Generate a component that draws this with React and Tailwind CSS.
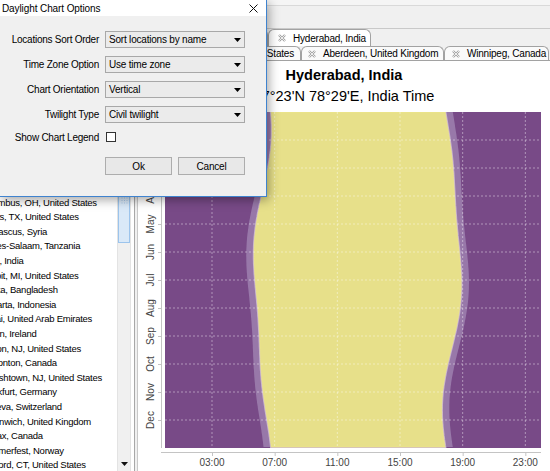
import React, { useMemo } from "react";

// Hyderabad, India
const LAT = 17.38;
const LON = 78.48;
const TZ = 5.5;

const PLOT_L = 27;
const PLOT_W = 376;
const PLOT_H = 336;

const MONTHS = ["Jan", "Feb", "Mar", "Apr", "May", "Jun", "Jul", "Aug", "Sep", "Oct", "Nov", "Dec"];
const HOURS = [3, 7, 11, 15, 19, 23];

// the list is scrolled: earlier entries sit under the options dialog
const locations = [
  "Columbus, OH, United States",
  "Dallas, TX, United States",
  "Damascus, Syria",
  "Dar-es-Salaam, Tanzania",
  "Delhi, India",
  "Detroit, MI, United States",
  "Dhaka, Bangladesh",
  "Djakarta, Indonesia",
  "Dubai, United Arab Emirates",
  "Dublin, Ireland",
  "Edison, NJ, United States",
  "Edmonton, Canada",
  "Englishtown, NJ, United States",
  "Frankfurt, Germany",
  "Geneva, Switzerland",
  "Greenwich, United Kingdom",
  "Halifax, Canada",
  "Hammerfest, Norway",
  "Hartford, CT, United States",
  "Helsinki, Finland",
];

function sunTimes(n, alt) {
  const rad = Math.PI / 180;
  const decl = -23.44 * Math.cos((2 * Math.PI * (n + 10)) / 365);
  const B = (2 * Math.PI * (n - 81)) / 364;
  const eot = 9.87 * Math.sin(2 * B) - 7.53 * Math.cos(B) - 1.5 * Math.sin(B);
  const noon = 12 + (TZ * 15 - LON) / 15 - eot / 60;
  const cosw =
    (Math.sin(alt * rad) - Math.sin(LAT * rad) * Math.sin(decl * rad)) /
    (Math.cos(LAT * rad) * Math.cos(decl * rad));
  const w = Math.acos(cosw) / rad / 15;
  return [noon - w, noon + w];
}

const hx = (h) => PLOT_L + (h / 24) * PLOT_W;

function buildCurves() {
  const rise = [];
  const set = [];
  const dawn = [];
  const dusk = [];
  for (let n = 1; n <= 366; n += 2) {
    const y = ((n - 1) / 365) * PLOT_H;
    const [r, s] = sunTimes(n, -0.833);
    const [a, b] = sunTimes(n, -6);
    rise.push(`${hx(r).toFixed(1)},${y.toFixed(1)}`);
    set.push(`${hx(s).toFixed(1)},${y.toFixed(1)}`);
    dawn.push(`${(hx(a) - 1.5).toFixed(1)},${y.toFixed(1)}`);
    dusk.push(`${(hx(b) + 1.5).toFixed(1)},${y.toFixed(1)}`);
  }
  return {
    day: [...rise, ...set.reverse()].join(" "),
    twilight: [...dawn, ...dusk.reverse()].join(" "),
  };
}

function TabClose() {
  return (
    <svg width="8" height="8" viewBox="0 0 8 8" className="shrink-0">
      <path d="M1 1L7 7M7 1L1 7" stroke="#a3a3a3" strokeWidth="2.4" />
      <path d="M1 1L7 7M7 1L1 7" stroke="#f4f4f4" strokeWidth="0.9" />
    </svg>
  );
}

function Tab({ label, width, pad, active }) {
  return (
    <div
      className={`${width} ${pad} h-full flex items-center gap-[7px] rounded-t-[6px] border border-b-0 border-[#a2a2a2] whitespace-nowrap overflow-hidden text-[10px] tracking-[-0.2px] ${
        active ? "bg-white" : "bg-[#fafafa]"
      }`}
    >
      {label && <TabClose />}
      {label && <span>{label}</span>}
    </div>
  );
}

function DaylightChart() {
  const { day, twilight } = useMemo(buildCurves, []);

  return (
    <svg width="412" height="359" className="block overflow-visible">
      <defs>
        <clipPath id="plot-area">
          <rect x={PLOT_L} y={0} width={PLOT_W} height={PLOT_H} />
        </clipPath>
      </defs>
      <rect x={PLOT_L} y={0} width={PLOT_W} height={PLOT_H} fill="#784a87" />
      <g clipPath="url(#plot-area)">
        <polygon points={twilight} fill="#9878a9" />
        <polygon points={day} fill="none" stroke="#c6b1d2" strokeWidth="2.4" />
        <polygon points={day} fill="#e7e08a" stroke="#f2ea86" strokeWidth="0.6" />
        {HOURS.map((h) => (
          <line
            key={h}
            x1={hx(h)}
            x2={hx(h)}
            y1={0}
            y2={PLOT_H}
            stroke="#ffffff"
            strokeOpacity="0.42"
            strokeDasharray="2 2"
          />
        ))}
        {MONTHS.slice(1).map((m, i) => (
          <line
            key={m}
            x1={PLOT_L}
            x2={PLOT_L + PLOT_W}
            y1={(i + 1) * 28}
            y2={(i + 1) * 28}
            stroke="#ffffff"
            strokeOpacity="0.42"
            strokeDasharray="2 2"
          />
        ))}
      </g>

      {/* axes */}
      <line x1={23.5} x2={23.5} y1={0} y2={PLOT_H} stroke="#c4c4c4" />
      <line x1={23} x2={PLOT_L + PLOT_W} y1={340.5} y2={340.5} stroke="#c4c4c4" />
      {MONTHS.map((m, i) => (
        <g key={m}>
          <line x1={20} x2={23} y1={i * 28 + 0.5} y2={i * 28 + 0.5} stroke="#c4c4c4" />
          <text
            x={12}
            y={i * 28}
            transform={`rotate(-90 12 ${i * 28})`}
            textAnchor="middle"
            dominantBaseline="central"
            fontFamily="'Liberation Sans', Arial, sans-serif"
            fontSize="10"
            fill="#444"
          >
            {m}
          </text>
        </g>
      ))}
      {HOURS.map((h) => (
        <g key={h}>
          <line x1={hx(h) + 0.5} x2={hx(h) + 0.5} y1={341} y2={344} stroke="#c4c4c4" />
          <text
            x={hx(h)}
            y={354}
            textAnchor="middle"
            fontFamily="'Liberation Sans', Arial, sans-serif"
            fontSize="10"
            fill="#444"
          >
            {String(h).padStart(2, "0")}:00
          </text>
        </g>
      ))}
    </svg>
  );
}

function LocationPanel() {
  return (
    <div className="w-[135px] h-full flex bg-white border-r border-[#a8a8a8]">
      <div className="flex-1 overflow-hidden pt-[166.6px] text-[9.5px] tracking-[-0.25px] leading-[14.6px]">
        {locations.map((name) => (
          <div key={name} className="h-[14.6px] ml-[-21px] whitespace-nowrap">
            {name}
          </div>
        ))}
      </div>
      <div className="w-[14px] flex flex-col bg-[#f0f0f0] border-x border-[#e3e3e3]">
        <div className="h-[14px]" />
        <div className="flex-1">
          <div className="mt-[114px] h-[86px] bg-[#dae9f8] border border-[#9cc4ec] flex items-center justify-center">
            <svg width="7" height="7" viewBox="0 0 7 7">
              {[0.5, 3, 5.5].map((y) =>
                [0.5, 3, 5.5].map((x) => <rect key={`${x}-${y}`} x={x} y={y} width="1" height="1" fill="#a9c9ea" />)
              )}
            </svg>
          </div>
        </div>
        <div className="h-[14px] flex items-center justify-center">
          <svg width="7" height="4" viewBox="0 0 7 4">
            <path d="M0 0H7L3.5 4Z" fill="#111" />
          </svg>
        </div>
      </div>
      <div className="w-[3px]" />
    </div>
  );
}

function ChartFolder() {
  return (
    <div className="w-[412px] h-full flex flex-col">
      <div className="h-[17px] flex">
        <Tab width="w-[130px]" pad="pl-[9px]" />
        <Tab label="Hyderabad, India" width="w-[103px]" pad="pl-[9px]" active />
      </div>
      <div className="h-[15px] flex border-b border-[#a2a2a2]">
        <Tab label="Columbus, OH, United States" width="w-[163px] justify-end" pad="pr-[6px]" />
        <Tab label="Aberdeen, United Kingdom" width="w-[143px]" pad="pl-[6px]" />
        <Tab label="Winnipeg, Canada" width="w-[105px]" pad="pl-[7px]" />
      </div>
      <div className="flex-1 bg-white flex flex-col">
        <div className="pt-[5px] text-center text-[14.5px] leading-[18px] font-bold">Hyderabad, India</div>
        <div className="mt-[3px] text-center text-[14.5px] leading-[18px]">17°23'N 78°29'E, India Time</div>
        <div className="mt-[7px]">
          <DaylightChart />
        </div>
      </div>
    </div>
  );
}

function Select({ value }) {
  return (
    <div className="h-[17px] w-[140px] flex items-center justify-between pl-[3px] pr-[3px] bg-[#ebebeb] border border-[#a8a8a8]">
      <span className="text-[10px] tracking-[-0.2px] whitespace-nowrap">{value}</span>
      <svg width="7" height="4" viewBox="0 0 7 4">
        <path d="M0 0H7L3.5 4Z" fill="#000" />
      </svg>
    </div>
  );
}

function OptionsDialog() {
  const rows = [
    ["Locations Sort Order", "Sort locations by name"],
    ["Time Zone Option", "Use time zone"],
    ["Chart Orientation", "Vertical"],
    ["Twilight Type", "Civil twilight"],
  ];

  return (
    <div className="absolute left-0 top-0 z-10 w-[267px] h-[197px] flex flex-col bg-[#f0f0f0] border-r border-b border-[#3f83cf] shadow-[2px_3px_10px_rgba(0,0,0,0.35)]">
      <div className="h-[16px] shrink-0 bg-white flex items-center justify-between pl-[2px] pr-[8px]">
        <span className="text-[10px] tracking-[-0.1px]">Daylight Chart Options</span>
        <svg width="9" height="9" viewBox="0 0 9 9">
          <path d="M0.5 0.5L8.5 8.5M8.5 0.5L0.5 8.5" stroke="#111" strokeWidth="1" />
        </svg>
      </div>
      <div className="pt-[15px] grid grid-cols-[99px_140px] grid-rows-[17px_17px_17px_17px_12px] gap-x-[6px] gap-y-[8px] items-center">
        {rows.map(([label, value]) => (
          <React.Fragment key={label}>
            <span className="text-right text-[10px] tracking-[-0.25px] whitespace-nowrap">{label}</span>
            <Select value={value} />
          </React.Fragment>
        ))}
        <span className="text-right text-[10px] tracking-[-0.25px] whitespace-nowrap">Show Chart Legend</span>
        <div className="ml-[1px] w-[10px] h-[10px] bg-white border border-[#333]" />
      </div>
      <div className="mt-[14px] pl-[105px] flex gap-[6px]">
        <button className="w-[67px] h-[18px] bg-[#e8e8e8] border border-[#adadad] text-[10px] tracking-[-0.2px]">Ok</button>
        <button className="w-[67px] h-[18px] bg-[#e8e8e8] border border-[#adadad] text-[10px] tracking-[-0.2px]">Cancel</button>
      </div>
    </div>
  );
}

export default function App() {
  return (
    <div className="relative w-[550px] h-[471px] overflow-hidden bg-[#f0f0f0] text-black font-['Liberation_Sans',Arial,sans-serif]">
      <div className="h-[6px] bg-[#f5f5f5] border-b border-[#d9d9d9]" />
      <div className="h-[23px] bg-[#f0f0f0] border-b border-[#c9c9c9]" />
      <div className="h-[442px] flex">
        <LocationPanel />
        <div className="w-[3px] h-full bg-[#f0f0f0] border-r border-[#c8c8c8]" />
        <ChartFolder />
      </div>
      <OptionsDialog />
    </div>
  );
}
